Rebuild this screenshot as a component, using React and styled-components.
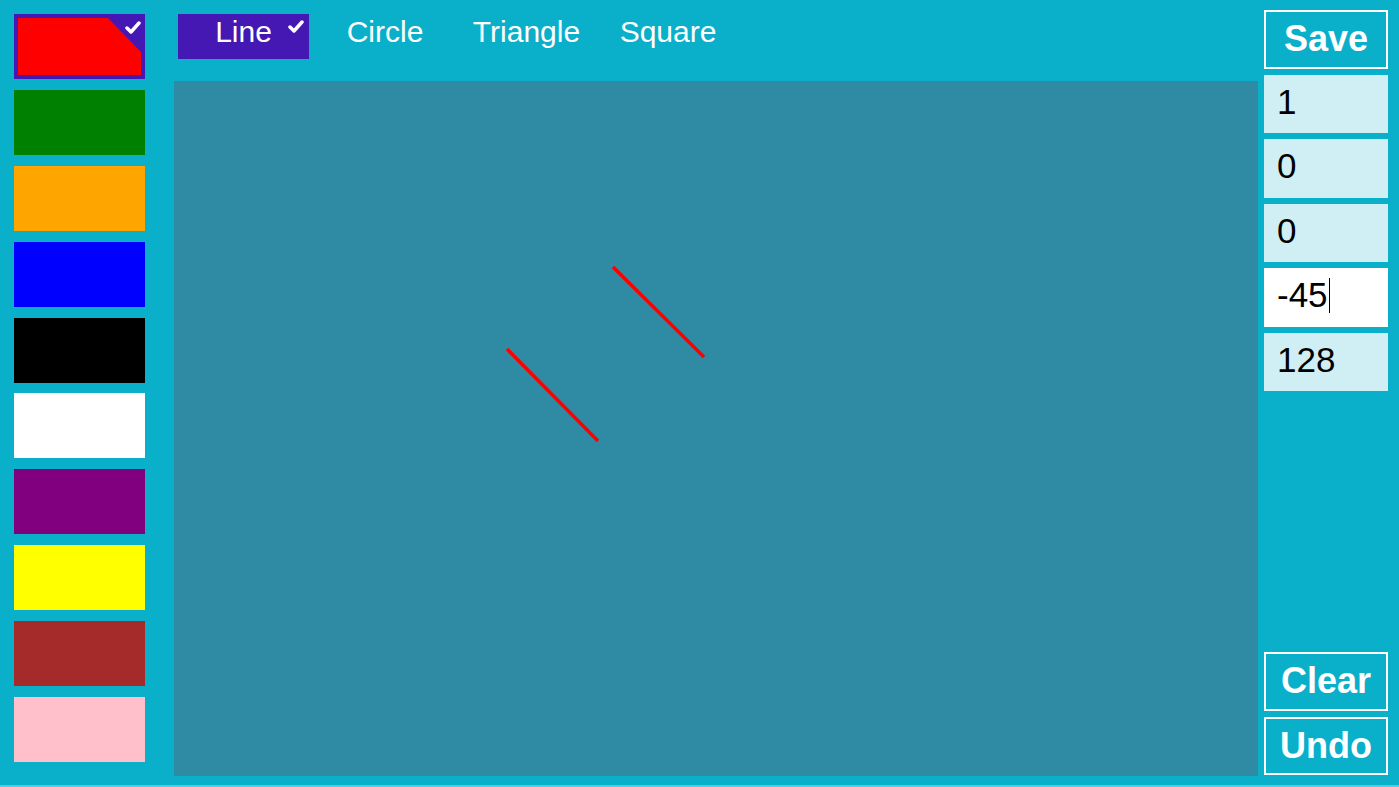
import React from 'react'
import styled, { createGlobalStyle } from 'styled-components'

const GlobalStyle = createGlobalStyle`
  html, body {
    margin: 0;
    padding: 0;
    overflow: hidden;
  }
  body {
    font-family: 'Liberation Sans', Arial, sans-serif;
  }
`

const Page = styled.div`
  width: 1399px;
  height: 787px;
  box-sizing: border-box;
  display: flex;
  padding: 0 11px 0 14px;
  background-color: #0aafca;
  border-bottom: 2px solid #5ccadb;
`

const Palette = styled.div`
  width: 131px;
  padding-top: 14px;
  display: flex;
  flex-direction: column;
  gap: 10.9px;
  flex-shrink: 0;
`

const Swatch = styled.div`
  position: relative;
  height: 65px;
  box-sizing: border-box;
  background-color: ${(p) => (p.$selected ? '#4517b3' : p.$color)};
  padding: ${(p) => (p.$selected ? '4px' : '0')};
`

const SwatchFill = styled.div`
  width: 100%;
  height: 100%;
  background-color: ${(p) => p.$color};
  clip-path: polygon(0 0, calc(100% - 33px) 0, 100% 34px, 100% 100%, 0 100%);
`

const Check = styled.svg`
  position: absolute;
  top: ${(p) => p.$top}px;
  right: ${(p) => p.$right}px;
  width: 16px;
  height: 13px;
`

const Main = styled.div`
  width: 1084px;
  margin-left: 29px;
  display: flex;
  flex-direction: column;
  flex-shrink: 0;
`

const Tabs = styled.div`
  display: flex;
  gap: 10.5px;
  padding: 14px 0 0 4px;
  height: 45px;
  margin-bottom: 22px;
`

const Tab = styled.div`
  position: relative;
  width: 131px;
  height: 45px;
  text-align: center;
  font-size: 30px;
  line-height: 35px;
  color: #ffffff;
  background-color: ${(p) => (p.$active ? '#4517b3' : 'transparent')};
`

const Canvas = styled.div`
  height: 695px;
  background-color: #2f8ba3;
  position: relative;
`

const Drawing = styled.svg`
  position: absolute;
  inset: 0;
  width: 100%;
  height: 100%;
`

const Side = styled.div`
  width: 124px;
  margin-left: 6px;
  padding: 10px 0 10px;
  display: flex;
  flex-direction: column;
  gap: 6px;
  flex-shrink: 0;
`

const Button = styled.div`
  height: 58.5px;
  box-sizing: border-box;
  border: 2px solid #ffffff;
  color: #ffffff;
  font-weight: bold;
  font-size: 36px;
  display: flex;
  align-items: center;
  justify-content: center;
  margin-top: ${(p) => (p.$pushed ? 'auto' : '0')};
`

const Field = styled.div`
  height: 58.5px;
  box-sizing: border-box;
  padding: 0 0 4px 13px;
  display: flex;
  align-items: center;
  font-size: 35px;
  color: #000000;
  background-color: ${(p) => (p.$active ? '#ffffff' : '#cfeff5')};
`

const Caret = styled.span`
  display: inline-block;
  width: 1px;
  height: 35px;
  margin-left: 1px;
  background-color: #000000;
`

const colors = [
  'red',
  'green',
  'orange',
  'blue',
  'black',
  'white',
  'purple',
  'yellow',
  'brown',
  'pink',
]

const tools = ['Line', 'Circle', 'Triangle', 'Square']

const fields = [
  { value: '1' },
  { value: '0' },
  { value: '0' },
  { value: '-45', active: true },
  { value: '128' },
]

const lines = [
  { x1: 333, y1: 268, x2: 424, y2: 360 },
  { x1: 439, y1: 186, x2: 530, y2: 276 },
]

const Tick = ({ top, right }) => (
  <Check $top={top} $right={right} viewBox="0 0 16 13">
    <polyline
      points="2,7 6,11 14,2"
      fill="none"
      stroke="#ffffff"
      strokeWidth="3.5"
      strokeLinecap="round"
      strokeLinejoin="round"
    />
  </Check>
)

const App = () => {
  const selectedColor = 'red'
  const selectedTool = 'Line'

  return (
    <>
      <GlobalStyle />
      <Page>
        <Palette>
          {colors.map((color) => (
            <Swatch
              key={color}
              $color={color}
              $selected={color === selectedColor}
            >
              {color === selectedColor && (
                <>
                  <SwatchFill $color={color} />
                  <Tick top={7} right={4} />
                </>
              )}
            </Swatch>
          ))}
        </Palette>

        <Main>
          <Tabs>
            {tools.map((tool) => (
              <Tab key={tool} $active={tool === selectedTool}>
                {tool}
                {tool === selectedTool && <Tick top={6} right={5} />}
              </Tab>
            ))}
          </Tabs>
          <Canvas>
            <Drawing>
              {lines.map((l, i) => (
                <line key={i} {...l} stroke="red" strokeWidth="3.5" />
              ))}
            </Drawing>
          </Canvas>
        </Main>

        <Side>
          <Button>Save</Button>
          {fields.map((f, i) => (
            <Field key={i} $active={f.active}>
              {f.value}
              {f.active && <Caret />}
            </Field>
          ))}
          <Button $pushed>Clear</Button>
          <Button>Undo</Button>
        </Side>
      </Page>
    </>
  )
}

export default App
